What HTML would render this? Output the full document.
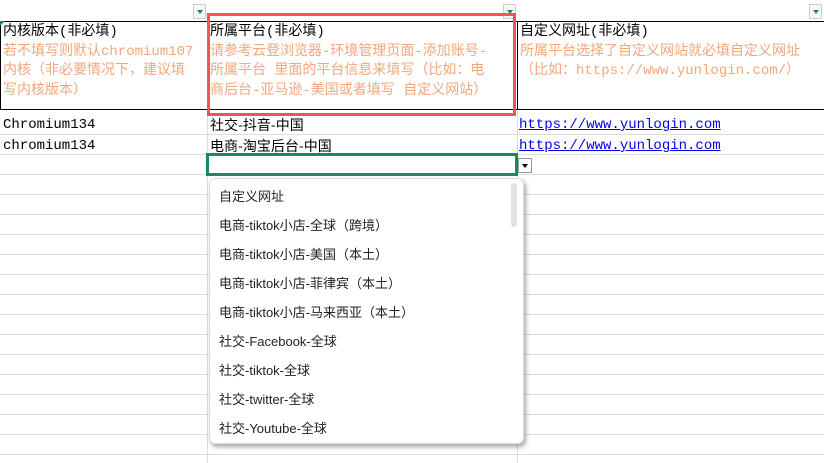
<!DOCTYPE html>
<html><head><meta charset="utf-8"><style>
body{margin:0;width:824px;height:463px;overflow:hidden;background:#fff;position:relative;font-family:"Liberation Mono","Noto Sans CJK SC",monospace;}
.a{position:absolute}
.hl{position:absolute;left:0;width:824px;height:1px;background:#dcdcdc}
.vl{position:absolute;top:110px;width:1px;height:353px;background:#dcdcdc}
.hd{position:absolute;top:21px;height:89px;border:1px solid #000;box-sizing:border-box;padding:1px 2px;font-size:14px;line-height:19.5px;color:#000;overflow:hidden;white-space:nowrap}
.hd .o{color:#f2a77c}
.fb{position:absolute;top:4px;width:13px;height:15px;border:1px solid #ccc;box-sizing:border-box;background:#f7f7f7}
.fb:after{content:"";position:absolute;left:3px;top:5px;border-left:3px solid transparent;border-right:3px solid transparent;border-top:4px solid #1a8a5a}
.c{position:absolute;font-size:14px;line-height:20px;white-space:nowrap}
.lk{color:#0000ee;text-decoration:underline}
.dd{position:absolute;left:209px;top:178px;width:313px;height:264px;background:#fff;border:1px solid #ddd;border-radius:6px;box-shadow:2px 3px 5px rgba(0,0,0,.35)}
.it{position:absolute;left:9px;font-family:"Liberation Sans","Noto Sans CJK SC",sans-serif;font-size:13px;color:#222;white-space:nowrap}
</style></head><body>
<div class="hl" style="top:134px"></div><div class="hl" style="top:154px"></div>
<div class="hl" style="top:174px"></div><div class="hl" style="top:194px"></div>
<div class="hl" style="top:214px"></div><div class="hl" style="top:234px"></div>
<div class="hl" style="top:254px"></div><div class="hl" style="top:274px"></div>
<div class="hl" style="top:294px"></div><div class="hl" style="top:314px"></div>
<div class="hl" style="top:334px"></div><div class="hl" style="top:354px"></div>
<div class="hl" style="top:374px"></div><div class="hl" style="top:394px"></div>
<div class="hl" style="top:414px"></div><div class="hl" style="top:434px"></div>
<div class="hl" style="top:454px"></div>
<div class="vl" style="left:207px"></div><div class="vl" style="left:517px"></div>
<div class="fb" style="left:193px"></div><div class="fb" style="left:503px"></div><div class="fb" style="left:809px"></div>
<div class="hd" style="left:0;width:208px">内核版本(非必填)<br><span class="o">若不填写则默认chromium107<br>内核（非必要情况下，建议填<br>写内核版本）</span></div>
<div class="a" style="left:0;top:21px;border-top:5px solid #1a8a5a;border-right:5px solid transparent;width:0;height:0"></div>
<div class="hd" style="left:207px;width:311px">所属平台(非必填)<br><span class="o">请参考云登浏览器-环境管理页面-添加账号-<br>所属平台 里面的平台信息来填写（比如：电<br>商后台-亚马逊-美国或者填写 自定义网站）</span></div>
<div class="hd" style="left:517px;width:310px">自定义网址(非必填)<br><span class="o">所属平台选择了自定义网站就必填自定义网址<br>（比如：https://www.yunlogin.com/）</span></div>
<div class="a" style="left:207px;top:13px;width:309px;height:103px;border:3px solid #f05454;box-sizing:border-box"></div>
<div class="c" style="left:3px;top:115px">Chromium134</div>
<div class="c" style="left:3px;top:136px">chromium134</div>
<div class="c" style="left:210px;top:115px;font-family:'Noto Sans CJK SC',sans-serif">社交-抖音-中国</div>
<div class="c" style="left:210px;top:136px;font-family:'Noto Sans CJK SC',sans-serif">电商-淘宝后台-中国</div>
<div class="c lk" style="left:519px;top:115px">https://www.yunlogin.com</div>
<div class="c lk" style="left:519px;top:136px">https://www.yunlogin.com</div>
<div class="a" style="left:206px;top:153px;width:312px;height:23px;border:3px solid #1a8a5a;box-sizing:border-box"></div>
<div class="a" style="left:518px;top:158px;width:14px;height:15px;border:1px solid #8a9aa8;box-sizing:border-box;background:#fff"><div style="position:absolute;left:3px;top:5px;border-left:3px solid transparent;border-right:3px solid transparent;border-top:4px solid #000"></div></div>
<div class="dd">
<div class="a" style="left:301px;top:4px;width:6px;height:44px;background:#e2e2e4;border-radius:3px"></div>
<div class="it" style="top:7px">自定义网址</div>
<div class="it" style="top:36px">电商-tiktok小店-全球（跨境）</div>
<div class="it" style="top:65px">电商-tiktok小店-美国（本土）</div>
<div class="it" style="top:94px">电商-tiktok小店-菲律宾（本土）</div>
<div class="it" style="top:123px">电商-tiktok小店-马来西亚（本土）</div>
<div class="it" style="top:152px">社交-Facebook-全球</div>
<div class="it" style="top:181px">社交-tiktok-全球</div>
<div class="it" style="top:210px">社交-twitter-全球</div>
<div class="it" style="top:239px">社交-Youtube-全球</div>
</div>
</body></html>
